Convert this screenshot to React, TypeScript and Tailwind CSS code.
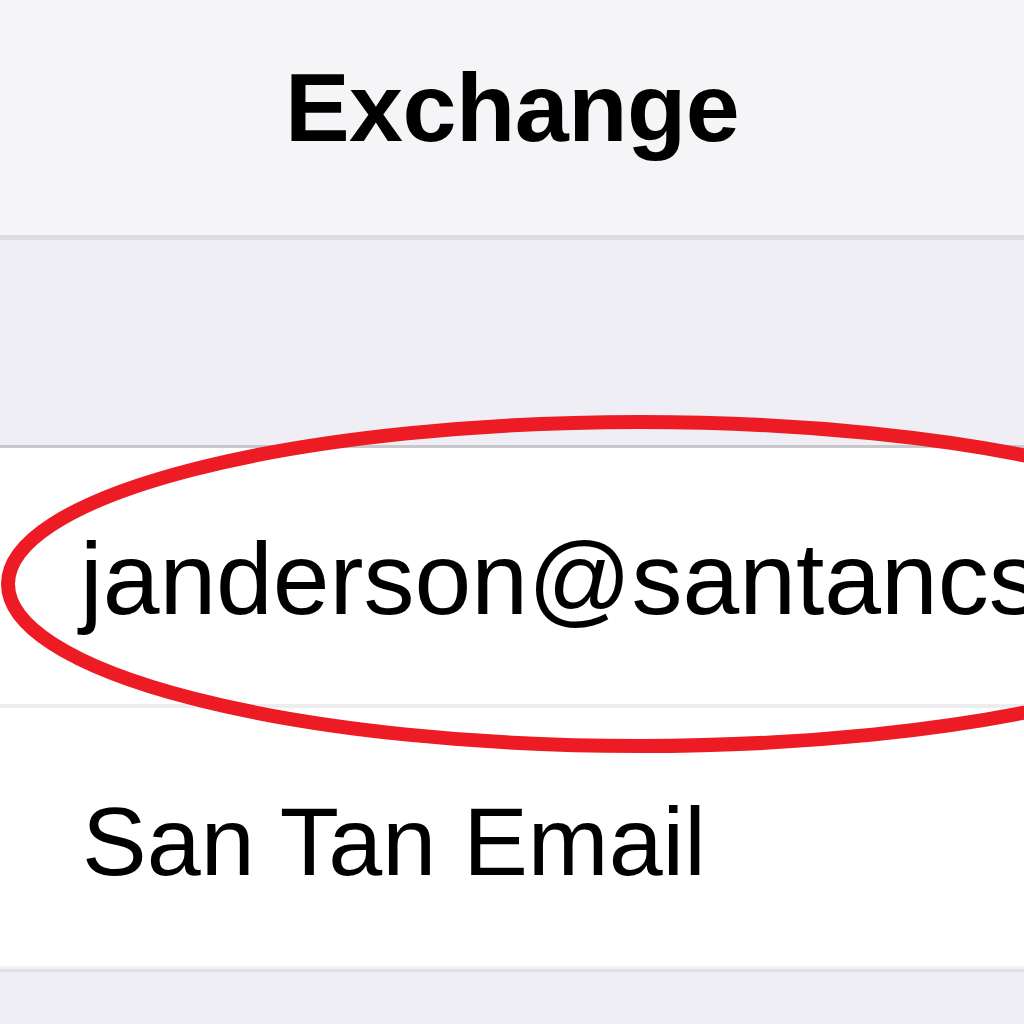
export default function App() {
  return (
    <div className="relative w-[1024px] h-[1024px] overflow-hidden bg-[#efeef4]" style={{ fontFamily: '"Liberation Sans", Arial, sans-serif' }}>
      <div className="h-[240px] bg-[#f5f5f7] border-b-[5px] border-[#dedde2] flex items-center justify-center">
        <h1 className="text-[97px] font-bold text-black leading-none tracking-[-0.5px] pb-[20px]">Exchange</h1>
      </div>
      <div className="h-[205px] bg-[#efeef4]" />
      <div className="bg-white border-t-[3px] border-[#c8c7cc]">
        <div className="h-[256px] flex items-center pl-[80px] overflow-hidden whitespace-nowrap">
          <span className="text-[102px] text-black leading-none pt-[6px]">janderson@santancs.org</span>
        </div>
        <div className="h-[4px] bg-[#ededf0]" />
        <div className="h-[258px] flex items-center pl-[82px]">
          <span className="text-[97px] text-black leading-none pt-[8px]">San Tan Email</span>
        </div>
        <div className="h-[3px] bg-[#f2f2f4]" />
        <div className="h-[3px] bg-[#e0dfe4]" />
      </div>
      <svg className="absolute left-0 top-0 pointer-events-none" width="1024" height="1024" viewBox="0 0 1024 1024">
        <ellipse cx="640" cy="584" rx="632" ry="162" fill="none" stroke="#ed1c24" strokeWidth="14" />
      </svg>
    </div>
  );
}
